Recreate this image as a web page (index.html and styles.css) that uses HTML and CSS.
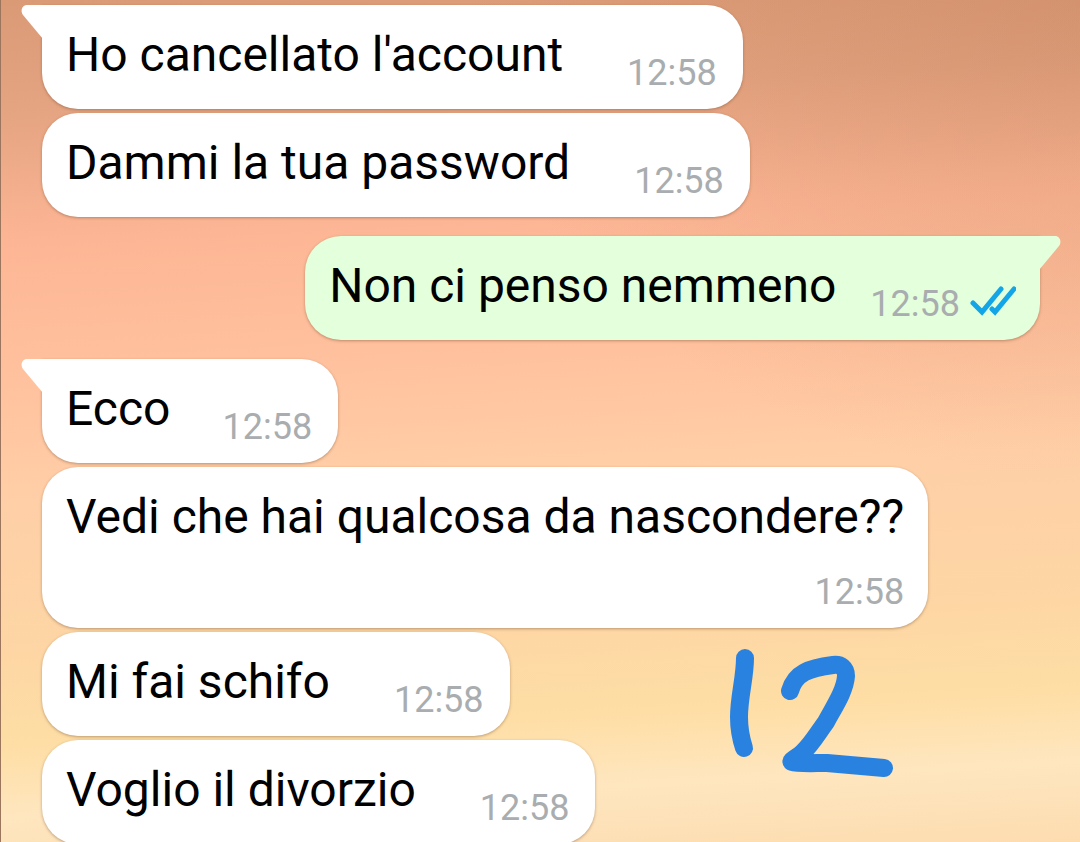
FILE: index.html
```html
<!DOCTYPE html>
<html lang="it">
<head>
  <meta charset="UTF-8">
  <meta name="viewport" content="width=device-width, initial-scale=1">
  <title>Chat</title>
  <link rel="stylesheet" href="styles.css">
</head>
<body>
  <main class="chat">
    <ol class="messages">
      <li class="message first">
        <svg class="tail" viewBox="0 0 22 36" aria-hidden="true"><path d="M22 0H6C1 0-1 6 2 10L22 34Z"/></svg>
        <p class="text">Ho cancellato l'account</p>
        <time class="time">12:58</time>
      </li>
      <li class="message">
        <p class="text">Dammi la tua password</p>
        <time class="time">12:58</time>
      </li>
      <li class="message out first">
        <svg class="tail" viewBox="0 0 22 36" aria-hidden="true"><path d="M0 0H16C21 0 23 6 20 10L0 34Z"/></svg>
        <p class="text">Non ci penso nemmeno</p>
        <span class="status">
          <time class="time">12:58</time>
          <svg class="ticks" viewBox="0 0 46 42" role="img" aria-label="Letto">
            <path d="M3 20L12 29L31 6M22 26L25 29L44 6"/>
          </svg>
        </span>
      </li>
      <li class="message first short">
        <svg class="tail" viewBox="0 0 22 36" aria-hidden="true"><path d="M22 0H6C1 0-1 6 2 10L22 34Z"/></svg>
        <p class="text">Ecco</p>
        <time class="time">12:58</time>
      </li>
      <li class="message long">
        <p class="text">Vedi che hai qualcosa da nascondere??</p>
        <time class="time">12:58</time>
      </li>
      <li class="message">
        <p class="text">Mi fai schifo</p>
        <time class="time">12:58</time>
      </li>
      <li class="message">
        <p class="text">Voglio il divorzio</p>
        <time class="time">12:58</time>
      </li>
    </ol>

    <!-- handwritten number -->
    <svg class="doodle" viewBox="0 0 180 144" role="img" aria-label="12">
      <path d="M25 18C25 38 19 56 19 77C19 89 21 99 24 108"/>
      <path d="M70 51C75 33 89 28 113 25C121 24 126 28 126 36C125 51 114 67 106 82C98 93 91 105 83 112C78 117 69 121 72 122C78 124 95 123 107 123L164 128"/>
    </svg>
  </main>
</body>
</html>
```

FILE: styles.css
```css
* {
  box-sizing: border-box;
}
body {
  margin: 0;
  font-family: Roboto, "Liberation Sans", sans-serif;
  color: #000;
}
.chat {
  position: relative;
  height: 100vh;
  overflow: hidden;
  border-left: 1px solid #9b765c;
  background:
    radial-gradient(ellipse at 100% 0, rgba(185, 120, 80, 0.3), transparent 40%),
    linear-gradient(177deg, #db9a76 0%, #e5a482 13%, #fdb695 27%, #ffc09d 41%, #ffcfa7 56%, #fdd6a4 73%, #fedea5 83%, #fee6bf 91%, #fddcb0 100%);
}
.messages {
  display: flex;
  flex-direction: column;
  align-items: flex-start;
  gap: 4px;
  margin: 0;
  padding: 5px 40px 0 41px;
  list-style: none;
}
.message {
  position: relative;
  display: flex;
  flex-shrink: 0;
  align-items: flex-end;
  gap: 64px;
  padding: 22px 26px 15px 24px;
  border-radius: 36px;
  background: #fff;
  box-shadow: 0 1px 3px rgba(110, 70, 45, 0.45);
}
.message.first {
  border-top-left-radius: 0;
}
.message.short {
  gap: 52px;
}
.message.out {
  align-self: flex-end;
  gap: 34px;
  margin: 15px 0;
  padding-right: 24px;
  border-radius: 36px 0 36px 36px;
  background: #e4ffdb;
}
.message.long {
  flex-direction: column;
  gap: 15px;
  padding-right: 24px;
}
.text {
  margin: 0 0 11px;
  font-size: 48px;
  line-height: 56px;
}
.time {
  color: #a9adaf;
  font-size: 36px;
  line-height: 42px;
}
.status {
  display: flex;
  align-items: center;
  gap: 10px;
}
.tail {
  position: absolute;
  top: 0;
  right: 100%;
  width: 22px;
  height: 36px;
  margin-right: -1px;
  fill: #fff;
  overflow: visible;
}
.out .tail {
  right: auto;
  left: 100%;
  margin: 0 0 0 -1px;
  fill: #e4ffdb;
}
.ticks {
  width: 46px;
  height: 42px;
  fill: none;
  stroke: #12a5e8;
  stroke-width: 5;
  stroke-linecap: round;
}
.doodle {
  position: absolute;
  top: 640px;
  right: 180px;
  width: 180px;
  height: 144px;
  fill: none;
  stroke: #2a82e0;
  stroke-width: 18;
  stroke-linecap: round;
  stroke-linejoin: round;
}
```
